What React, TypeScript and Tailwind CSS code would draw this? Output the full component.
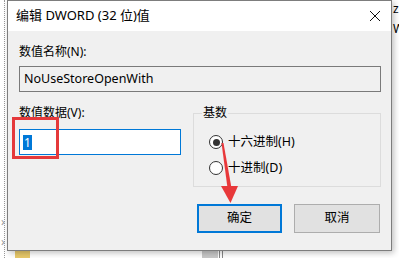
import React from "react";

const font = {
  fontFamily: '"Segoe UI", "Noto Sans", "Noto Sans CJK SC", sans-serif',
};

function Radio({ checked, label }: { checked: boolean; label: string }) {
  return (
    <div className="flex items-center gap-[5px] h-[16px]">
      <span className="w-[14px] h-[14px] rounded-full border border-[#333] bg-white flex items-center justify-center">
        {checked && <span className="w-[7px] h-[7px] rounded-full bg-[#333]" />}
      </span>
      <span className="text-[12.5px] leading-none text-black">{label}</span>
    </div>
  );
}

export default function App() {
  return (
    <div className="relative w-[399px] h-[258px] bg-white overflow-hidden" style={font}>
      {/* tree view behind the dialog */}
      <div className="absolute left-[4px] top-0 h-full border-l border-dotted border-[#999]" />
      <div className="absolute left-[1px] top-[215px] flex flex-col gap-[6px] text-[#999] text-[12px] leading-[14px]">
        <span>›</span>
        <span>›</span>
      </div>
      <div className="absolute left-[15px] top-[251px] w-[15px] h-[8px] bg-[#e8c96a]" />
      <div className="absolute left-[202px] top-[250px] w-[16px] h-[8px] bg-[#c8c8c8]" />
      <div className="absolute left-[219px] top-[250px] h-[8px] w-[4px] border-x border-[#888]" />
      <div className="absolute left-[393px] top-[2px] flex flex-col gap-[6px] text-[12px] leading-[14px] text-black">
        <span>z</span>
        <span>W</span>
      </div>

      {/* dialog window */}
      <div className="absolute left-[7px] top-0 w-[385px] h-[251px] flex flex-col bg-[#f0f0f0] border border-[#7d7d7d] shadow-[2px_2px_6px_rgba(0,0,0,0.25)]">
        <div className="h-[30px] shrink-0 bg-white flex items-center justify-between pl-[8px] pr-[9px]">
          <span className="text-[13px] text-black">编辑 DWORD (32 位)值</span>
          <svg width="12" height="12" viewBox="0 0 12 12" className="mr-[1px]">
            <path d="M1 1L11 11M11 1L1 11" stroke="#111" strokeWidth="1" />
          </svg>
        </div>

        <div className="flex flex-col pl-[11px] pr-[10px] pt-[13px]">
          <div className="text-[12px] leading-[16px] text-black">数值名称(N):</div>
          <div className="mt-[6px] h-[26px] border border-[#7a7a7a] bg-[#f0f0f0] flex items-center pl-[4px] text-[12.5px] text-black">
            NoUseStoreOpenWith
          </div>

          <div className="flex mt-[13px]">
            <div className="w-[162px] flex flex-col">
              <div className="text-[12px] leading-[16px] text-black">数值数据(V):</div>
              <div className="relative mt-[8px] h-[26px] border border-[#0078d7] bg-white flex items-center pl-[3px]">
                <span className="bg-[#0078d7] text-white text-[12px] leading-[15px] px-[1px]">1</span>
                <div className="absolute left-[-8px] top-[-13px] w-[47px] h-[42px] border-[3px] border-[#e5393b]" />
              </div>
            </div>

            <div className="ml-[12px] flex-1 relative mt-[8px] h-[74px] border border-[#dcdcdc] flex flex-col gap-[10px] pl-[15px] pt-[20px]">
              <span className="absolute left-[8px] top-[-9px] px-[1px] bg-[#f0f0f0] text-[12px] leading-[16px] text-black">
                基数
              </span>
              <Radio checked label="十六进制(H)" />
              <Radio checked={false} label="十进制(D)" />
            </div>
          </div>

          <div className="flex justify-end gap-[12px] mt-[17px] pr-[1px]">
            <button className="w-[85px] h-[29px] border-2 border-[#0078d7] bg-[#e1e1e1] text-[12.5px] text-black">
              确定
            </button>
            <button className="w-[86px] h-[29px] border border-[#adadad] bg-[#e1e1e1] text-[12.5px] text-black">
              取消
            </button>
          </div>
        </div>
      </div>

      {/* red annotation arrow */}
      <svg className="absolute left-0 top-0" width="399" height="258" viewBox="0 0 399 258">
        <polygon points="221.5,143 223.5,143 231.5,188 227.5,188" fill="#e8383a" />
        <polygon points="221,186 238,186 230.5,203" fill="#e8383a" />
      </svg>
    </div>
  );
}
